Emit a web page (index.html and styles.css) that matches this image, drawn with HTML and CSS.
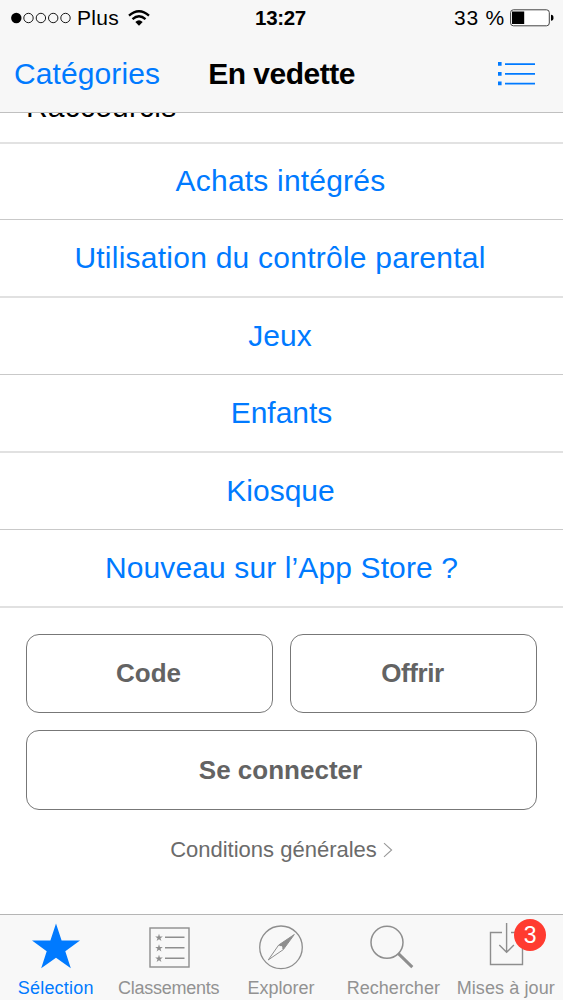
FILE: index.html
```html
<!DOCTYPE html>
<html lang="fr">
<head>
<meta charset="utf-8">
<title>App Store – En vedette</title>
<link rel="stylesheet" href="styles.css">
</head>
<body>
<div class="screen">
  <header class="top">
    <div class="status">
      <div class="carrier">
        <svg class="signal" width="60" height="12" viewBox="0 0 60 12"><circle cx="5.3" cy="6" r="5.2" fill="#000"/><g fill="none" stroke="#000" stroke-width=".9"><circle cx="17.5" cy="6" r="4.7"/><circle cx="29.9" cy="6" r="4.7"/><circle cx="42.2" cy="6" r="4.7"/><circle cx="54.5" cy="6" r="4.7"/></g></svg>
        <span class="operator">Plus</span>
        <svg class="wifi" width="22" height="16" viewBox="0 0 22 16"><g fill="none" stroke="#000" stroke-width="2.3"><path d="M1 5.7Q11-3.3 21 5.7"/><path d="M4.5 9.2Q11 3.4 17.5 9.2"/></g><path d="M7.3 12Q11 8.7 14.7 12L11 15.7Z"/></svg>
      </div>
      <span class="clock">13:27</span>
      <div class="power">
        <span class="percent">33 %</span>
        <svg width="44" height="18" viewBox="0 0 44 18"><rect x=".6" y=".8" width="38.7" height="16" rx="2.8" fill="#fff" stroke="#444" stroke-width="1"/><rect x="2" y="2.5" width="12.2" height="12.5"/><path d="M41 5.8Q43.5 6 43.5 8.8T41 11.8Z"/></svg>
      </div>
    </div>
    <nav class="navbar">
      <a class="categories">Catégories</a>
      <h1 class="title">En vedette</h1>
      <svg class="list-icon" width="38" height="26" viewBox="0 0 38 26" fill="#007aff"><path d="M0 1h3.6v3.8H0zM0 11h3.6v3.8H0zM0 20.5h3.6v3.8H0z"/><path d="M7 2.2h30v1.7H7zM7 12h30v1.7H7zM7 21.7h30v1.7H7z"/></svg>
    </nav>
  </header>
  <main class="content">
    <h2 class="heading"><span>Raccourcis</span></h2>
    <ul class="shortcuts">
      <li class="first"><a class="purchases">Achats intégrés</a></li>
      <li class="soft"><a class="parental">Utilisation du contrôle parental</a></li>
      <li><a class="games">Jeux</a></li>
      <li class="soft"><a>Enfants</a></li>
      <li><a class="newsstand">Kiosque</a></li>
      <li class="soft"><a class="new">Nouveau sur l’App Store ?</a></li>
    </ul>
    <div class="actions">
      <button class="button">Code</button>
      <button class="button gift">Offrir</button>
      <button class="button wide">Se connecter</button>
    </div>
    <a class="terms"><span>Conditions générales</span><svg width="10" height="16" viewBox="0 0 10 16" fill="none" stroke="#999" stroke-width="1.1"><path d="M1 1.2L8.6 8 1 14.8"/></svg></a>
  </main>
  <footer class="tabs">
    <a class="tab active">
      <svg width="48" height="50" viewBox="0 0 48 50"><path fill="#007aff" d="M24 3.5L29.6 20.5H48L33.3 31.3 38.8 48.2 24 37.7 9.2 48.2 14.7 31.3 0 20.5H18.4Z"/></svg>
      <span class="featured">Sélection</span>
    </a>
    <a class="tab">
      <svg width="48" height="50" viewBox="0 0 48 50"><rect x="5" y="8" width="39" height="39" fill="none" stroke="#8e8e8e" stroke-width="1.4"/><path d="M20 17.3h19.5M20 27.8h19.5M20 38.2h19.5" stroke="#8e8e8e" stroke-width="1.4"/><defs><path id="star" d="M0-4L.9-1.2H3.8L1.5.5 2.4 3.3 0 1.6-2.4 3.3-1.5.5-3.8-1.2H-.9Z"/></defs><g fill="#8e8e8e"><use href="#star" x="14" y="17.7"/><use href="#star" x="14" y="28.2"/><use href="#star" x="14" y="38.7"/></g></svg>
      <span class="charts">Classements</span>
    </a>
    <a class="tab">
      <svg width="48" height="50" viewBox="0 0 48 50"><circle cx="24" cy="27.3" r="21.3" fill="none" stroke="#8e8e8e" stroke-width="1.3"/><path d="M37.3 14.5L21.7 25 26.3 29.6Z" fill="#8e8e8e"/><path d="M37.3 14.5L21.7 25 11.3 39.9 26.3 29.6Z" fill="none" stroke="#8e8e8e"/><circle cx="24" cy="27.3" r="1.3" fill="#f7f7f7"/></svg>
      <span class="explore">Explorer</span>
    </a>
    <a class="tab">
      <svg width="48" height="50" viewBox="0 0 48 50"><circle cx="18" cy="22.3" r="16" fill="none" stroke="#8e8e8e" stroke-width="1.5"/><path d="M29.4 33.7L43.3 47.2" stroke="#8e8e8e" stroke-width="3"/></svg>
      <span>Rechercher</span>
    </a>
    <a class="tab">
      <svg width="48" height="50" viewBox="0 0 48 50" fill="none" stroke="#8e8e8e" stroke-width="1.4"><path d="M20 12.5H8.5V44.5H40.5V12.5H29M24.6 3V32M17.3 25L24.6 32.3 31.9 25"/></svg>
      <b class="badge">3</b>
      <span class="updates">Mises à jour</span>
    </a>
  </footer>
</div>
</body>
</html>
```
FILE: styles.css
```css
* { box-sizing: border-box; }
body {
  margin: 0;
  background: #fff;
  color: #000;
  font-family: "Liberation Sans", Arial, sans-serif;
}
h1, h2, ul { margin: 0; padding: 0; }
svg { display: block; flex: none; }
.screen {
  width: 563px;
  height: 1000px;
  display: flex;
  flex-direction: column;
  overflow: hidden;
}
.top {
  height: 113px;
  flex: none;
  background: #f7f7f7;
  border-bottom: 1px solid #c0c0c0;
}
.status {
  display: grid;
  grid-template-columns: 1fr auto 1fr;
  align-items: center;
  height: 36px;
  padding: 0 9px 0 11px;
  font-size: 21px;
  white-space: nowrap;
}
.carrier, .power { display: flex; align-items: center; }
.operator { margin-left: 6px; letter-spacing: .3px; }
.wifi { margin-left: 9px; }
.clock { font-weight: 700; font-size: 20.5px; letter-spacing: -.3px; padding-right: 4px; }
.power { justify-content: flex-end; gap: 5px; }
.percent { letter-spacing: .8px; }
.navbar {
  display: grid;
  grid-template-columns: 1fr auto 1fr;
  align-items: center;
  height: 76px;
  padding: 0 27px 0 14px;
  font-size: 30px;
  white-space: nowrap;
}
.categories { color: #007aff; letter-spacing: .1px; }
.title { font-size: 30px; letter-spacing: -.5px; padding-left: 13px; }
.list-icon { justify-self: end; }
.content { flex: 1; background: #fff; }
.heading {
  display: flex;
  height: 31px;
  overflow: hidden;
  padding-left: 26px;
  border-bottom: 2px solid #e2e2e2;
  font-size: 30px;
  font-weight: 400;
  line-height: 34px;
  letter-spacing: .2px;
}
.heading span { margin-top: -23px; }
.shortcuts { list-style: none; }
.shortcuts li {
  display: flex;
  align-items: center;
  justify-content: center;
  height: 77px;
  padding-bottom: 1px;
  border-bottom: 1px solid #c9c9c9;
  font-size: 30px;
  color: #007aff;
  white-space: nowrap;
}
.shortcuts .first { height: 76px; }
.shortcuts .soft { height: 78px; padding-bottom: 0; border-bottom: 2px solid #e1e1e1; }
.purchases { letter-spacing: .2px; margin-right: 2px; }
.parental { letter-spacing: .24px; margin-right: 3px; }
.games { margin-right: 3px; }
.newsstand { margin-right: 2px; }
.new { letter-spacing: .12px; }
.actions {
  display: grid;
  grid-template-columns: 1fr 1fr;
  grid-template-rows: 79px 80px;
  gap: 17px;
  padding: 26px 26px 0;
}
.button {
  border: 1px solid #777;
  border-radius: 13px;
  background: none;
  color: #636363;
  font: 700 26px "Liberation Sans", Arial, sans-serif;
  padding: 0 2px 0 0;
}
.gift { letter-spacing: -.4px; }
.wide { grid-column: span 2; }
.terms {
  display: flex;
  align-items: center;
  justify-content: center;
  gap: 6px;
  margin-top: 28px;
  font-size: 22px;
  line-height: 24px;
  color: #6b6b6b;
}
.tabs {
  display: grid;
  grid-template-columns: repeat(5, 112.4px);
  height: 86px;
  flex: none;
  border-top: 1px solid #b5b5b5;
  background: #f8f8f8;
  color: #929292;
  font-size: 18px;
  white-space: nowrap;
}
.tab {
  position: relative;
  display: flex;
  flex-direction: column;
  align-items: center;
  padding-top: 5px;
  gap: 8px;
  line-height: 20px;
}
.active { color: #007aff; }
.featured { letter-spacing: .2px; margin-right: 1px; }
.charts { letter-spacing: -.25px; }
.updates { letter-spacing: .1px; }
.badge {
  position: absolute;
  left: 64.5px;
  top: 4px;
  width: 32px;
  height: 32px;
  border-radius: 50%;
  background: #ff3b30;
  color: #fff;
  font-size: 23px;
  font-weight: 400;
  line-height: 32px;
  text-align: center;
}
```
